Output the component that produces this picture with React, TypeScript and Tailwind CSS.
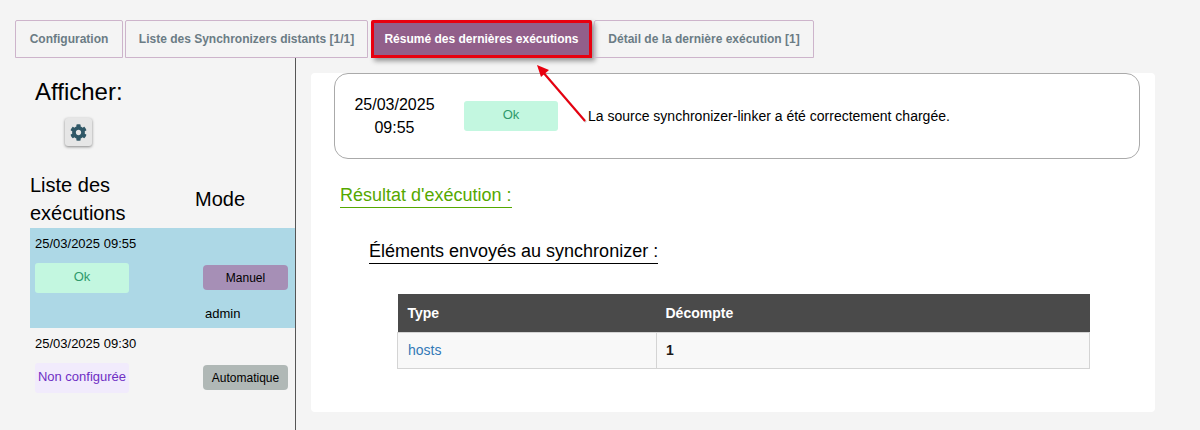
import React from "react";
import { FaCog } from "react-icons/fa";

const tabs = [
  { label: "Configuration", width: "w-[108px]" },
  { label: "Liste des Synchronizers distants [1/1]", width: "w-[243px]" },
  { label: "Résumé des dernières exécutions", width: "w-[221px] ml-px", active: true },
  { label: "Détail de la dernière exécution [1]", width: "w-[220px]" },
];

const StatusBox = ({ children, tone }: { children: React.ReactNode; tone: "ok" | "none" }) => (
  <div
    className={`flex h-[30px] w-[94px] items-center justify-center rounded-[3px] pb-[2px] text-[13px] ${
      tone === "ok" ? "bg-[#c3f7e0] text-[#2f9a6c]" : "bg-[#f1ebfc] text-[#6f2fc4]"
    }`}
  >
    {children}
  </div>
);

const App: React.FC = () => {
  return (
    <div className="relative h-[430px] w-[1200px] overflow-hidden bg-[#f4f4f4] pt-5 font-['Liberation_Sans',Arial,sans-serif] text-black">
      {/* onglets */}
      <div className="flex h-[38px] gap-[2px] pl-[15px]">
        {tabs.map((tab) => (
          <div
            key={tab.label}
            className={`flex items-center justify-center rounded-t-[2px] text-[12px] font-bold ${tab.width} ${
              tab.active
                ? "border-[3px] border-[#e8000f] bg-[#925f8a] text-white shadow-[3px_3px_5px_rgba(0,0,0,0.4)]"
                : "border border-[#cdb4cb] text-[#6b7c85]"
            }`}
          >
            {tab.label}
          </div>
        ))}
      </div>

      <div className="flex h-[372px]">
        {/* colonne de gauche */}
        <aside className="w-[296px] shrink-0 border-r border-[#555]">
          <div className="pl-[35px] pt-[20px] text-[24px] leading-[28px]">Afficher:</div>
          <div className="ml-[65px] mt-[12px] flex h-[28px] w-[27px] items-center justify-center rounded-[3px] bg-[#e6e6e6] text-[#2f5766] shadow-[0_1px_3px_rgba(0,0,0,0.45)]">
            <FaCog size={17} />
          </div>
          <div className="mt-[25px] flex items-center pl-[30px] text-[20px] leading-[28px]">
            <div className="w-[165px]">
              Liste des
              <br />
              exécutions
            </div>
            <div>Mode</div>
          </div>
          <div className="ml-[30px] mt-px h-[100px] bg-[#add8e6] px-[5px] pt-[7px] text-[13px]">
            <div className="leading-[18px]">25/03/2025 09:55</div>
            <div className="mt-[10px] flex items-start justify-between pr-[2px]">
              <StatusBox tone="ok">Ok</StatusBox>
              <div className="mt-[2px] flex h-[25px] w-[85px] items-center justify-center rounded-[4px] bg-[#a68fb6] text-[12px]">
                Manuel
              </div>
            </div>
            <div className="mt-[12px] pl-[170px] leading-[18px]">admin</div>
          </div>
          <div className="ml-[30px] px-[5px] pt-[7px] text-[13px]">
            <div className="leading-[18px]">25/03/2025 09:30</div>
            <div className="mt-[10px] flex items-start justify-between pr-[2px]">
              <StatusBox tone="none">Non configurée</StatusBox>
              <div className="mt-[2px] flex h-[25px] w-[85px] items-center justify-center rounded-[4px] bg-[#b0b8b6] text-[12px]">
                Automatique
              </div>
            </div>
          </div>
        </aside>

        {/* contenu */}
        <main className="pl-[15px] pt-[15px]">
          <div className="h-[339px] w-[844px] rounded-[4px] bg-white pl-[23px]">
            <div className="flex h-[86px] w-[806px] items-center rounded-[14px] border border-[#aaa] pl-[19px]">
              <div className="w-[81px] text-center text-[16px] leading-[23px]">
                25/03/2025
                <br />
                09:55
              </div>
              <div className="ml-[29px]">
                <StatusBox tone="ok">Ok</StatusBox>
              </div>
              <div className="ml-[30px] text-[14px]">La source synchronizer-linker a été correctement chargée.</div>
            </div>
            <div className="ml-[6px] mt-[25px] w-fit border-b border-[#55a800] text-[18px] leading-[23px] text-[#55a800]">
              Résultat d'exécution :
            </div>
            <div className="ml-[35px] mt-[31px] w-fit border-b border-black text-[18px] leading-[24px]">
              Éléments envoyés au synchronizer :
            </div>
            <table className="ml-[63px] mt-[30px] w-[693px] border-collapse text-[14px]">
              <thead>
                <tr className="h-[38px] bg-[#4a4a4a] text-left font-bold text-white">
                  <th className="w-[259px] pl-[10px] pt-[2px]">Type</th>
                  <th className="pl-[9px] pt-[2px]">Décompte</th>
                </tr>
              </thead>
              <tbody>
                <tr className="h-[36px] bg-[#f8f8f8]">
                  <td className="border border-[#d4d4d4] pl-[10px] text-[#337ab7]">hosts</td>
                  <td className="border border-[#d4d4d4] pl-[9px] font-bold text-[#1a1a1a]">1</td>
                </tr>
              </tbody>
            </table>
          </div>
        </main>
      </div>

      {/* flèche d'annotation */}
      <svg className="pointer-events-none absolute left-[525px] top-[55px]" width="70" height="75" viewBox="0 0 70 75">
        <line x1="60" y1="66" x2="16" y2="15" stroke="#888" strokeWidth="2" opacity="0.45" transform="translate(1 1)" />
        <line x1="60" y1="66" x2="17" y2="16" stroke="#e8000f" strokeWidth="2" />
        <polygon points="12,10 24,15 16,22" fill="#e8000f" />
      </svg>
    </div>
  );
};

export default App;
